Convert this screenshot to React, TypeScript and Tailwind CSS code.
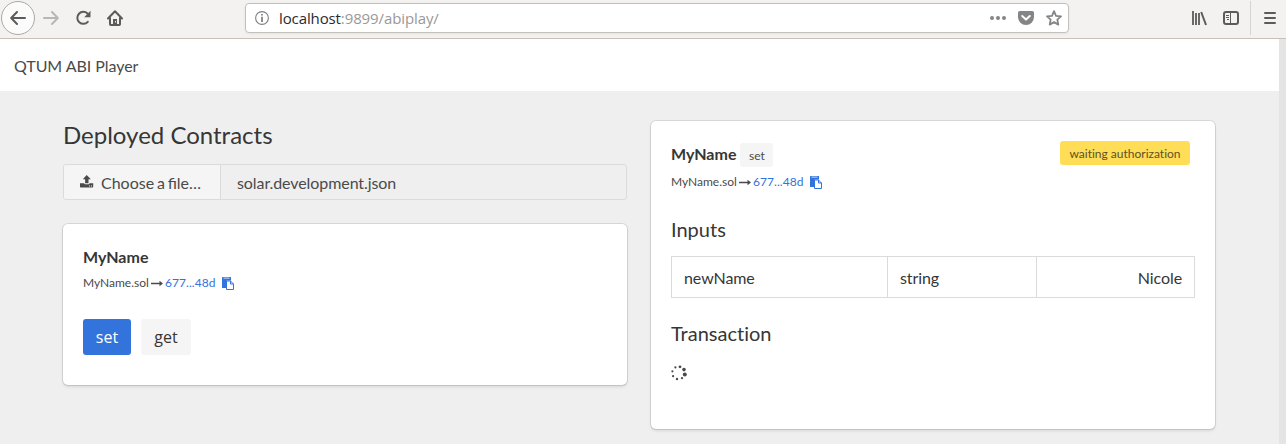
import type { ReactNode } from "react";

function CopyIcon() {
  return (
    <svg width="12" height="13" viewBox="0 0 12 13" className="shrink-0">
      <path fill="#3273dc" d="M.6 0h8.400v3.500H5.200a1 1 0 0 0-1 1v6.500H.6a.6.6 0 0 1-.6-.6V.6a.6.6 0 0 1 .6-.6z" />
      <path fill="#a9c4f0" d="M1.500.5h6v1.300h-6z" />
      <path fill="#fff" stroke="#3273dc" d="M4.500 4h4l3 3v5.500h-7z" />
      <path fill="none" stroke="#3273dc" d="M8.500 4v3h3" />
    </svg>
  );
}

function LongArrow() {
  return (
    <svg width="12" height="7" viewBox="0 0 12 7" className="shrink-0">
      <path fill="#4a4a4a" d="M0 2.700h8.500V.8L12 3.500 8.500 6.200V4.300H0z" />
    </svg>
  );
}

function ContractAddress() {
  return (
    <div className="flex h-[18px] items-center text-[12px] leading-[18px]">
      <span>MyName.sol</span>
      <span className="ml-[2px] mr-[2px] flex">
        <LongArrow />
      </span>
      <a className="tracking-[0.08px] text-[#3273dc]">677...48d</a>
      <span className="ml-[6px] flex">
        <CopyIcon />
      </span>
    </div>
  );
}

function Box({ className, children }: { className: string; children: ReactNode }) {
  return (
    <section
      className={
        "rounded-[5px] bg-white px-5 shadow-[0_2px_3px_rgba(10,10,10,0.1),0_0_0_1px_rgba(10,10,10,0.1)] " + className
      }
    >
      {children}
    </section>
  );
}

function Toolbar() {
  return (
    <header className="flex h-[39px] items-center border-b border-[#c9c0b9] bg-[#f3f2f0] pb-[2px] text-[#5c5b59]">
      <div className="ml-[1px] flex h-[34px] w-[34px] items-center justify-center rounded-full border border-[#aaa9a7] bg-[#fbfbfb]">
        <svg width="16" height="16" viewBox="0 0 16 16" fill="none" stroke="#5c5b59" strokeWidth="2" strokeLinecap="round" strokeLinejoin="round">
          <path d="M15 8H1.500M7 2 1.200 8 7 14" />
        </svg>
      </div>
      <svg className="ml-[8px]" width="16" height="16" viewBox="0 0 16 16" fill="none" stroke="#b8b7b5" strokeWidth="2" strokeLinecap="round" strokeLinejoin="round">
        <path d="M1 8h13.500M9 2l5.800 6L9 14" />
      </svg>
      <svg className="ml-[16px]" width="16" height="16" viewBox="0 0 16 16">
        <path fill="none" stroke="#5c5b59" strokeWidth="2" strokeLinecap="round" d="M12.500 3.500A6 6 0 1 0 12.800 11.800" />
        <path fill="#5c5b59" d="M15.500.8v6.400H9.200z" />
      </svg>
      <svg className="ml-[16px]" width="16" height="16" viewBox="0 0 16 16">
        <path fill="none" stroke="#5c5b59" strokeWidth="2" strokeLinecap="round" strokeLinejoin="round" d="M1 8.500 8 1.300l7 7.200M3 8v6.200a.8.8 0 0 0 .8.8h8.400a.8.8 0 0 0 .8-.8V8" />
        <path fill="#5c5b59" d="M6 9h4v6H6z" />
        <path fill="#f3f2f0" d="M8 11h1v1.500H8z" />
      </svg>
      <div className="ml-[122px] flex h-[30px] w-[824px] items-center rounded-[4px] border border-[#c3c0bc] bg-white pl-[9px] pr-[6px] shadow-[0_1px_3px_rgba(0,0,0,0.06)]">
        <svg width="14" height="14" viewBox="0 0 14 14">
          <circle cx="7" cy="7" r="6.400" fill="none" stroke="#808080" strokeWidth="1.100" />
          <path fill="#737373" d="M6.200 3h1.600v1.600H6.200zM6.200 5.800h1.600V11H6.200z" />
        </svg>
        <span className="ml-[10px] whitespace-nowrap font-['Open_Sans','Noto_Sans',sans-serif] text-[15px] leading-[22px] tracking-[-0.11px] text-[#999]">
          <span className="text-[#2b2b2b]">localhost</span>:9899/abiplay/
        </span>
        <svg className="ml-auto" width="16" height="16" viewBox="0 0 16 16" fill="#858585">
          <circle cx="2" cy="8" r="2" />
          <circle cx="8" cy="8" r="2" />
          <circle cx="14" cy="8" r="2" />
        </svg>
        <svg className="ml-[12px]" width="16" height="16" viewBox="0 0 16 16">
          <path fill="#858585" d="M1.800 1h12.400A1.800 1.800 0 0 1 16 2.800V7A8 8 0 0 1 0 7V2.800A1.800 1.800 0 0 1 1.800 1z" />
          <path fill="none" stroke="#fff" strokeWidth="2" strokeLinecap="round" strokeLinejoin="round" d="M4.200 6 8 9.600 11.800 6" />
        </svg>
        <svg className="ml-[12px]" width="16" height="16" viewBox="0 0 16 16">
          <path fill="none" stroke="#858585" strokeWidth="1.800" strokeLinejoin="round" d="m8 1.200 2 4.600 5 .5-3.700 3.300 1 5L8 12.100l-4.300 2.500 1-5L1 6.300l5-.5z" />
        </svg>
      </div>
      <svg className="ml-[122px]" width="16" height="16" viewBox="0 0 16 16" fill="none" stroke="#5c5b59" strokeWidth="2">
        <path d="M2 1v14M5 3v12M8 3v12" strokeWidth="1.800" />
        <path d="M10.200 2 15 15" />
      </svg>
      <svg className="ml-[16px]" width="16" height="16" viewBox="0 0 16 16" fill="none" stroke="#5c5b59">
        <rect x="1" y="2" width="14" height="12" rx="2" strokeWidth="2" />
        <path d="M7.500 2v12M3 5.500h3M3 7.500h3M4 9.500h2" />
      </svg>
      <span className="ml-[11px] h-[34px] w-px bg-[#d5d4d2]" />
      <svg className="ml-[13px]" width="12" height="14" viewBox="0 0 12 14" fill="none" stroke="#5c5b59" strokeWidth="2" strokeLinecap="round">
        <path d="M1 2h10M1 7h10M1 12h10" />
      </svg>
    </header>
  );
}

function FilePicker() {
  return (
    <div className="mt-4 flex h-9 overflow-hidden rounded-[3px] border border-[#dbdbdb]">
      <div className="flex w-[157px] items-center border-r border-[#dbdbdb] bg-[#f5f5f5] pl-4">
        <svg width="14" height="13" viewBox="0 0 14 13" fill="#4a4a4a" className="-mt-px">
          <path d="M6.700 0 2.800 4.300h2.300v3.900h3.400V4.300h2.400z" />
          <path d="M0 8.200h4.200c.1.700.6 1.100 1.300 1.100h2.700c.7 0 1.200-.4 1.300-1.100H13.200v3.600a.6.6 0 0 1-.6.6H.6a.6.6 0 0 1-.6-.6z" />
          <path fill="#f5f5f5" d="M9 10.500h1v1H9zM11 10.500h1v1h-1z" />
        </svg>
        <span className="ml-[7px] mt-[2px] [word-spacing:-1.3px]">Choose a file…</span>
      </div>
      <span className="ml-4 mt-[6px] tracking-[-0.08px]">solar.development.json</span>
    </div>
  );
}

const spinnerDots: [number, number, number][] = [
  [9, 1.8, 1.4],
  [13, 4.6, 1.8],
  [13.800, 9.400, 2],
  [11, 13.200, 1.100],
  [6, 14, 1.200],
  [2.100, 11.200, 1.100],
  [1.400, 6.300, 1.100],
  [4.400, 2.400, 1.100],
];

export default function App() {
  return (
    <div className="h-[444px] w-[1286px] overflow-hidden bg-[#efefef] font-[Lato,sans-serif] text-[16px] leading-6 text-[#4a4a4a]">
      <Toolbar />
      <div className="flex h-[405px]">
        <main className="w-[1279px]">
          <nav className="flex h-[52px] items-center bg-white pl-[14px] pt-[2px] tracking-[-0.05px]">QTUM ABI Player</nav>
          <div className="flex gap-6 pl-[63px] pt-[30px]">
            <div className="w-[564px]">
              <h1 className="text-[24px] leading-[27px] text-[#363636]">Deployed Contracts</h1>
              <FilePicker />
              <Box className="mt-6 h-[161px] pt-[21px]">
                <h2 className="font-bold text-[#363636]">MyName</h2>
                <div className="mt-[5px]">
                  <ContractAddress />
                </div>
                <div className="mt-[27px] flex gap-[10px] font-['Open_Sans','Noto_Sans',sans-serif] text-[16px]">
                  <button className="h-9 w-12 rounded-[3px] bg-[#3273dc] pb-px text-white">set</button>
                  <button className="h-9 w-[50px] rounded-[3px] bg-[#f5f5f5] pb-px text-[#363636]">get</button>
                </div>
              </Box>
            </div>
            <Box className="h-[308px] w-[564px] pt-5">
              <div className="flex">
                <h2 className="mt-px h-6 font-bold text-[#363636]">MyName</h2>
                <span className="ml-1 mt-[2px] flex h-6 w-[33px] items-center justify-center rounded-[3px] bg-[#f5f5f5] pt-[2px] text-[12px]">
                  set
                </span>
                <span className="ml-auto mr-[5px] flex h-6 w-[130px] items-center justify-center rounded-[3px] bg-[#ffdd57] pt-[2px] text-[12px] text-[#5d5124] [font-variant-ligatures:none]">
                  waiting authorization
                </span>
              </div>
              <div className="mt-[6px]">
                <ContractAddress />
              </div>
              <h3 className="mt-[27px] text-[20px] leading-[22px] text-[#363636]">Inputs</h3>
              <div className="mt-[16px] flex h-[42px] border border-[#dbdbdb] tracking-[-0.08px] text-[#363636]">
                <div className="w-[216px] border-r border-[#dbdbdb] pl-3 pt-[9px]">newName</div>
                <div className="w-[149px] border-r border-[#dbdbdb] pl-3 pt-[9px]">string</div>
                <div className="flex-1 pr-3 pt-[9px] text-right">Nicole</div>
              </div>
              <h3 className="mt-[24px] text-[20px] leading-[22px] text-[#363636] [font-variant-ligatures:none]">
                Transaction
              </h3>
              <svg className="mt-[21px]" width="16" height="16" viewBox="0 0 16 16" fill="#4a4a4a">
                {spinnerDots.map(([x, y, r]) => (
                  <circle key={x} cx={x} cy={y} r={r} />
                ))}
              </svg>
            </Box>
          </div>
        </main>
        <div className="w-[7px] bg-[#e4e4e4]" />
      </div>
    </div>
  );
}
